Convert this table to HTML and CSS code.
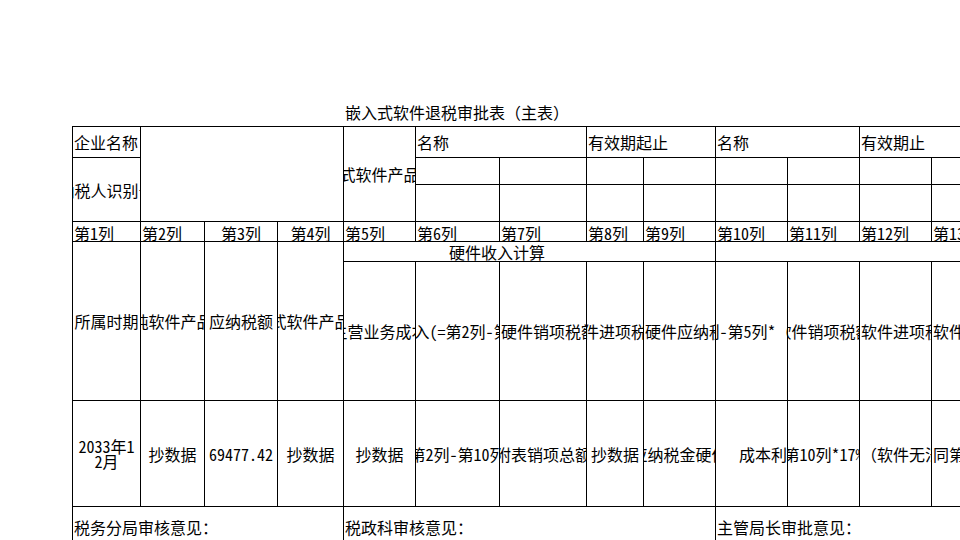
FILE: index.html
```html
<!DOCTYPE html>
<html lang="zh-CN">
<head>
<meta charset="utf-8">
<title>嵌入式软件退税审批表（主表）</title>
<link rel="stylesheet" href="styles.css">
</head>
<body>
<div class="page">
  <div class="title fw">嵌入式软件退税审批表（主表）</div>
  <div class="sheet">
    <div class="c l">企业名称</div>
    <div class="c s3 r3"></div>
    <div class="c r3">嵌入式软件产品名称</div>
    <div class="c s2 l">名称</div>
    <div class="c s2 l">有效期起止</div>
    <div class="c s2 l">名称</div>
    <div class="c s2 l">有效期止</div>

    <div class="c r2">纳税人识别号</div>
    <div class="c"></div><div class="c"></div><div class="c"></div><div class="c"></div>
    <div class="c"></div><div class="c"></div><div class="c"></div><div class="c"></div>
    <div class="c"></div><div class="c"></div><div class="c"></div><div class="c"></div>
    <div class="c"></div><div class="c"></div><div class="c"></div><div class="c"></div>

    <div class="c n l">第1列</div>
    <div class="c n l">第2列</div>
    <div class="c n">第3列</div>
    <div class="c n">第4列</div>
    <div class="c n l">第5列</div>
    <div class="c n l">第6列</div>
    <div class="c n l">第7列</div>
    <div class="c n l">第8列</div>
    <div class="c n l">第9列</div>
    <div class="c n l">第10列</div>
    <div class="c n l">第11列</div>
    <div class="c n l">第12列</div>
    <div class="c n l">第13列</div>

    <div class="c r2">所属时期</div>
    <div class="c r2">纯软件产品</div>
    <div class="c r2">应纳税额</div>
    <div class="c r2">嵌入式软件产品收入</div>
    <div class="c s5 l sub">硬件收入计算</div>
    <div class="c s4"></div>

    <div class="c">主营业务成本</div>
    <div class="c"><span>硬件收入(=第2列-第5列<span class="fw">）</span></span></div>
    <div class="c l">硬件销项税额</div>
    <div class="c">硬件进项税额</div>
    <div class="c l">硬件应纳税额</div>
    <div class="c"><span>硬件成本(=第2列-第5列*<span class="fw">（</span>1+成本利润率))</span></div>
    <div class="c">软件销项税额</div>
    <div class="c l">软件进项税额</div>
    <div class="c l">软件应纳税额</div>

    <div class="c wrap">2033年1<br>2月</div>
    <div class="c">抄数据</div>
    <div class="c">69477.42</div>
    <div class="c">抄数据</div>
    <div class="c">抄数据</div>
    <div class="c">第2列-第10列</div>
    <div class="c">附表销项总额</div>
    <div class="c">抄数据</div>
    <div class="c">应纳税金硬件</div>
    <div class="c l ind">成本利润率</div>
    <div class="c">第10列*17%</div>
    <div class="c l fw">（软件无法核算）</div>
    <div class="c l">同第12列</div>

    <div class="c s4 l fw">税务分局审核意见：</div>
    <div class="c s5 l fw">税政科审核意见：</div>
    <div class="c s4 l fw">主管局长审批意见：</div>
  </div>
</div>
</body>
</html>
```

FILE: styles.css
```css
html, body {
  margin: 0;
  padding: 0;
  background: #fff;
  overflow: hidden;
}

body {
  font-family: "Noto Sans CJK SC", "Noto Sans", sans-serif;
  font-size: 16px;
  color: #000;
  font-feature-settings: "hwid" 1;
}

.fw {
  font-feature-settings: normal;
}

.page {
  padding: 100px 0 0 72px;
  width: 960px;
  height: 540px;
  box-sizing: border-box;
}

.title {
  height: 26px;
  line-height: 24px;
  padding-left: 273px;
  white-space: nowrap;
}

.sheet {
  display: grid;
  width: max-content;
  grid-template-columns: 68px 64px 73px 66px 72px 84px 87px 57px 72px 72px 72px 72px 72px;
  grid-template-rows: 31px 27px 37px 20px 20px 139px 106px 40px;
  border-top: 1px solid #000;
  border-left: 1px solid #000;
}

.c {
  border-right: 1px solid #000;
  border-bottom: 1px solid #000;
  overflow: hidden;
  display: flex;
  align-items: center;
  justify-content: center;
  white-space: nowrap;
  line-height: 20px;
  min-width: 0;
  min-height: 0;
}

.c > span {
  flex: none;
}

.s2 { grid-column: span 2; }
.s3 { grid-column: span 3; }
.s4 { grid-column: span 4; }
.s5 { grid-column: span 5; }
.r2 { grid-row: span 2; }
.r3 { grid-row: span 3; }

.l {
  justify-content: flex-start;
  padding-left: 1px;
}

.n {
  align-items: flex-end;
  line-height: 16px;
}

.sub {
  padding-left: 105px;
}

.ind {
  padding-left: 23px;
}

.wrap {
  white-space: normal;
  text-align: center;
  line-height: 15px;
}
```
